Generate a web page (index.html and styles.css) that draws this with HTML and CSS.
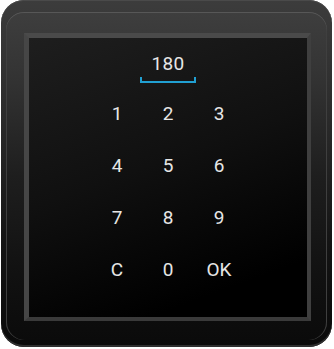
FILE: index.html
```html
<!DOCTYPE html>
<html>
<head>
<meta charset="utf-8">
<link rel="stylesheet" href="styles.css">
</head>
<body>
<div class="device">
  <div class="bezel">
    <div class="screen">
      <div class="value">180</div>
      <div class="underline"></div>
      <div class="keypad">
        <div class="key">1</div><div class="key">2</div><div class="key">3</div>
        <div class="key">4</div><div class="key">5</div><div class="key">6</div>
        <div class="key">7</div><div class="key">8</div><div class="key">9</div>
        <div class="key">C</div><div class="key">0</div><div class="key">OK</div>
      </div>
    </div>
  </div>
</div>
</body>
</html>
```

FILE: styles.css
```css
html, body {
  margin: 0;
  padding: 0;
  background: #ffffff;
}
body {
  width: 334px;
  height: 349px;
  overflow: hidden;
  font-family: Roboto, "Noto Sans", sans-serif;
}
.device {
  box-sizing: border-box;
  width: 331px;
  height: 347px;
  margin-left: 1px;
  border-radius: 23px;
  padding: 12px 5px 7px 5px;
  background: linear-gradient(to bottom, #3c3c3c 0%, #2a2a2a 35%, #141414 70%, #0a0a0a 100%);
  box-shadow: inset 0 1px 0 #4a4a4a, inset 0 -2px 0 #2e2e2e;
}
.bezel {
  box-sizing: border-box;
  height: 100%;
  border-radius: 18px;
  padding: 21px 16px 19px 18px;
  background: linear-gradient(to bottom, #3e3e3e 0%, #333 20%, #1e1e1e 50%, #111 80%, #0b0b0b 100%);
  box-shadow: inset 0 1px 0 #575757, inset 1px 0 0 #3f3f3f, inset -1px 0 0 #3f3f3f;
}
.screen {
  box-sizing: border-box;
  height: 288px;
  border-style: solid;
  border-width: 5px 4px 4px 5px;
  border-color: #4a4a4a #3f3f3f #3a3a3a #464646;
  background: linear-gradient(160deg, #1e1e1e 0%, #101010 45%, #000 85%);
  display: flex;
  flex-direction: column;
  align-items: center;
  padding-top: 15px;
}
.value {
  font-size: 19px;
  line-height: 22px;
  color: #e6e6e6;
  letter-spacing: 0.3px;
}
.underline {
  box-sizing: border-box;
  width: 56px;
  height: 6px;
  margin-top: 2px;
  border: 2px solid #21a0d2;
  border-top: none;
}
.keypad {
  margin-top: 5px;
  display: grid;
  grid-template-columns: repeat(3, 51px);
  grid-auto-rows: 52px;
}
.key {
  font-size: 19px;
  line-height: 52px;
  text-align: center;
  color: #e6e6e6;
}
```
